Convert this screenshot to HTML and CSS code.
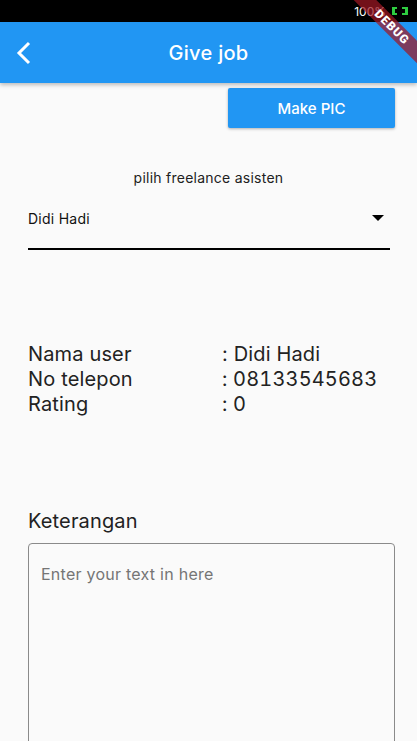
FILE: index.html
```html
<!DOCTYPE html>
<html>
<head>
<meta charset="utf-8">
<link rel="stylesheet" href="styles.css">
</head>
<body>
<div class="status">
  <span class="pct">100%</span>
  <svg class="batt" width="16" height="8" viewBox="0 0 16 8"><path d="M0 0h5v2H3v4h2v2H0z M10 0h6v8h-6v-2h3V2h-3z" fill="#2ecc40"/></svg>
</div>
<header class="appbar">
  <svg class="back" width="16" height="24" viewBox="0 0 16 24"><path d="M13 2 L3 12 L13 22" fill="none" stroke="#fff" stroke-width="3"/></svg>
  <h1 class="title">Give job</h1>
</header>
<main class="content">
  <div class="btnrow"><button class="pic">Make PIC</button></div>
  <p class="label">pilih freelance asisten</p>
  <div class="dropdown">
    <span>Didi Hadi</span>
    <svg width="12" height="6" viewBox="0 0 12 6"><path d="M0 0h12L6 6z" fill="#000"/></svg>
  </div>
  <div class="info">
    <span>Nama user</span><span>: Didi Hadi</span>
    <span>No telepon</span><span class="num">: 08133545683</span>
    <span>Rating</span><span class="num">: 0</span>
  </div>
  <h2 class="ket">Keterangan</h2>
  <div class="textarea"><span class="ph">Enter your text in here</span></div>
</main>
<div class="debug"><span>DEBUG</span></div>
</body>
</html>
```
FILE: styles.css
```css
html, body { margin: 0; padding: 0; }
body {
  width: 417px; height: 741px; overflow: hidden;
  background: #fafafa;
  font-family: Inter, Roboto, "Liberation Sans", sans-serif;
  color: #212121;
  position: relative;
}
.status {
  height: 22px; background: #000;
  display: flex; justify-content: flex-end; align-items: center;
  padding-right: 9px; gap: 6px;
}
.pct { color: #fff; font-size: 12px; }
.appbar {
  height: 61px; background: #2196f3;
  display: flex; align-items: center; position: relative;
  box-shadow: 0 2px 4px rgba(0,0,0,0.25);
}
.back { margin-left: 16px; }
.title {
  position: absolute; left: 0; right: 0; text-align: center;
  margin: 0; font-size: 20px; font-weight: 500; color: #fff;
  letter-spacing: 0.3px;
}
.content { padding: 0 22px 0 28px; }
.btnrow { display: flex; justify-content: flex-end; padding-top: 5px; }
.pic {
  width: 167px; height: 40px; border: none; border-radius: 2px;
  background: #2196f3; color: #fff;
  font-family: Inter, Roboto, sans-serif; font-size: 15px; font-weight: 500;
  box-shadow: 0 1px 3px rgba(0,0,0,0.3);
}
.label {
  text-align: center; font-size: 14px; margin: 42px -22px 0 -28px;
  line-height: 16px; color: #212121; letter-spacing: 0.25px;
}
.dropdown {
  display: flex; justify-content: space-between; align-items: center;
  margin-top: 16px; width: 362px;
  height: 32px; border-bottom: 2px solid #000; padding-bottom: 14px;
  font-size: 14px; color: #111; letter-spacing: 0.25px;
}
.dropdown svg { margin-right: 6px; }
.info {
  display: grid; grid-template-columns: 194px auto;
  font-size: 20px; line-height: 25px; margin-top: 92px; color: #222;
  letter-spacing: 0.15px;
}
.num { font-feature-settings: "tnum" 1; }
.ket {
  font-size: 20px; font-weight: 400; margin: 92px 0 0 0; line-height: 24px; color: #222;
  letter-spacing: 0.15px;
}
.textarea {
  margin-top: 10px; height: 220px; width: 367px;
  border: 1px solid #8a8a8a; border-radius: 4px;
  padding: 20px 12px; box-sizing: border-box;
}
.ph { font-size: 16px; color: #757575; letter-spacing: 0.25px; }
.debug {
  position: absolute; top: 0; right: 0; width: 80px; height: 80px; overflow: hidden;
}
.debug span {
  position: absolute; top: 19px; left: -5px; width: 120px; height: 16px;
  transform: rotate(45deg);
  background: rgba(160,24,36,0.72); color: #fff;
  font-family: Roboto, sans-serif;
  font-size: 12px; font-weight: 900; letter-spacing: 1px;
  text-align: center; line-height: 16px;
}
```
